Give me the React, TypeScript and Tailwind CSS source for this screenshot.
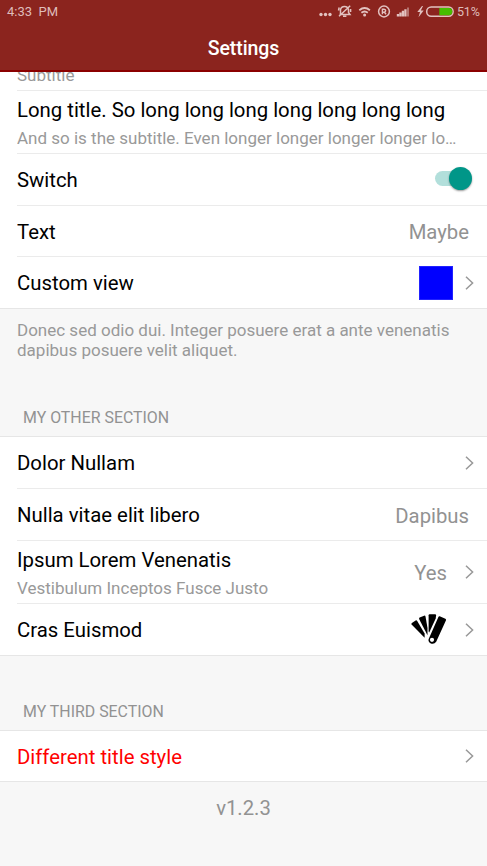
import type { ReactNode } from "react";

function Chevron() {
  return (
    <svg className="ml-[12px] h-[14px] w-[9px] shrink-0" viewBox="0 0 9 14" fill="none" stroke="#989898" strokeWidth="1.5">
      <path d="M1 0.8 7.6 7 1 13.2" />
    </svg>
  );
}

function Swatches() {
  return (
    <svg className="h-[32px] w-[36px]" viewBox="0 0 36 32" fill="#000">
      <path d="M.6 10.4Q0 9.5.9 8.9L4.6 6.5Q5.6 6 6.2 6.9L13.6 19.6V23.8Z" />
      <path d="M8.1 4.9Q7.8 3.9 8.7 3.5L13.1 1.7Q14.2 1.3 14.5 2.4L16.5 14V21.2Z" />
      <path d="M17.6 1.2Q17.6.2 18.6.2H24Q25.2.2 25.1 1.4L24.7 4.5 18.2 18.4 17.6 17.5Z" />
      <path fillRule="evenodd" d="M28.7 2.3 34.4 4.8Q35.4 5.3 35 6.3L25.2 27.7Q22.9 31 19.4 29.2 16.5 27.3 17.9 24.5L27.4 3Q27.8 1.9 28.7 2.3ZM21 23.7a2.1 2.1 0 1 0 0 4.2 2.1 2.1 0 0 0 0-4.2Z" />
    </svg>
  );
}

type RowProps = {
  title: string;
  subtitle?: string;
  value?: ReactNode;
  valueMargin?: string;
  arrow?: boolean;
  height?: string;
  last?: boolean;
  color?: string;
};

function Row({
  title,
  subtitle,
  value,
  valueMargin = "mr-[5px]",
  arrow,
  height = "h-[52px]",
  last,
  color = "text-black",
}: RowProps) {
  return (
    <div className={`bg-white ${last ? "border-b border-[#e6e6e6]" : "pl-[17px]"}`}>
      <div className={`flex items-center pr-[13px] ${height} ${last ? "pl-[17px]" : "border-b border-[#ebebeb]"}`}>
        <div className={`min-w-0 flex-1 ${subtitle ? "pt-[4px]" : "pt-px"}`}>
          <div className={`truncate text-[20.35px] leading-[28px] ${color}`}>{title}</div>
          {subtitle && <div className="truncate pr-[13px] text-[17px] leading-[28px] text-[#999]">{subtitle}</div>}
        </div>
        {typeof value === "string" ? (
          <div className={`pt-[2px] text-[20.3px] leading-[30px] text-[#929292] ${valueMargin}`}>{value}</div>
        ) : (
          value && <div className={valueMargin}>{value}</div>
        )}
        {arrow && <Chevron />}
      </div>
    </div>
  );
}

function Toggle() {
  return (
    <div className="relative -mr-[3px] -mt-[2px] h-[23px] w-[37px] pt-[4px]">
      <div className="h-[15px] w-[34px] rounded-full bg-[#b2dfdb]" />
      <div className="absolute right-0 top-0 size-[23px] rounded-full bg-[#009688] shadow-[0_1px_2px_rgba(0,0,0,0.4)]" />
    </div>
  );
}

function StatusBar() {
  return (
    <div className="flex h-[24px] items-center pl-[7px] pr-[7px] text-[13px] text-[#dfbcba]">
      <span>4:33&nbsp; PM</span>
      <svg className="ml-auto h-[24px] w-[138px]" viewBox="318 0 138 24" fill="none" stroke="#e2c2c0" strokeWidth="1.3">
        <g fill="#e2c2c0" stroke="none">
          <circle cx="321" cy="14.5" r="1.7" />
          <circle cx="325.5" cy="14.5" r="1.7" />
          <circle cx="330" cy="14.5" r="1.7" />
          <path d="M396.8 16.5v-2.5h2.3v2.5ZM399.3 16.5v-4h2.3v4ZM401.8 16.5v-5.8h2.3v5.8ZM404.3 16.5v-7.3h2.3v7.3Z" />
          <path fillOpacity=".5" d="M407 16.5v-9h2v9Z" />
          <path d="m422 6-4.7 6h2.7l-1.5 5.2 5.2-6.6h-2.9l2.2-4.6Z" />
        </g>
        <path strokeWidth="1.5" d="M340.5 14V9.8Q341 6.6 344.5 6.6T348.5 9.8V12.4L350 14.6H339.5M343 16.2h3.4M339 16.3 350.2 5.7M338.5 10.5 339.2 7.5M350.6 12v-3" />
        <path strokeWidth="1.8" d="M359.3 10.2q5.3-4.4 10.6 0M361.4 12.8q3.2-2.6 6.4 0" />
        <circle cx="364.6" cy="15" r="1.5" fill="#e2c2c0" stroke="none" />
        <circle cx="384" cy="11.5" r="5.4" strokeWidth="1.5" />
        <path strokeWidth="1.4" d="M382.4 14.3V9.2h1.6q1.7.2 1.7 1.5t-1.7 1.5h-1.6M384.2 12.1l1.9 2.2" />
        <rect x="426.7" y="6.9" width="26.4" height="9.4" rx="4.5" strokeWidth="1.5" />
        <path fill="#46bd00" stroke="none" d="M439.3 8h10q3 .3 3 3.6t-3 3.6h-10Z" />
      </svg>
      <span className="ml-px w-[23px] text-[12.5px] tracking-[-0.2px]">51%</span>
    </div>
  );
}

export default function App() {
  return (
    <div className="flex h-[866px] w-[487px] flex-col overflow-hidden bg-[#f7f7f7] font-['Roboto',sans-serif]">
      <header className="h-[72px] shrink-0 border-b-2 border-[#8b0000] bg-[#8b241e]">
        <StatusBar />
        <h1 className="mt-[9px] text-center text-[19.5px] font-medium leading-[32px] tracking-[-0.1px] text-white">Settings</h1>
      </header>

      <div className="h-[18px] shrink-0 overflow-hidden bg-white pl-[17px]">
        <div className="-mt-[11px] text-[17px] leading-[28px] text-[#999]">Subtitle</div>
      </div>
      <div className="h-px shrink-0 bg-white pl-[17px]">
        <div className="h-px bg-[#ebebeb]" />
      </div>
      <Row
        title="Long title. So long long long long long long long"
        subtitle="And so is the subtitle. Even longer longer longer longer longer longer"
        height="h-[63px]"
      />
      <Row title="Switch" value={<Toggle />} />
      <Row title="Text" value="Maybe" height="h-[51px]" />
      <Row
        title="Custom view"
        value={<div className="size-[34px] border border-[#2222ff] bg-[#0000ff]" />}
        valueMargin="mr-0"
        arrow
        height="h-[51px]"
        last
      />

      <p className="h-[88px] shrink-0 px-[17px] pt-[11px] text-[17px] leading-[20px] text-[#999]">
        Donec sed odio dui. Integer posuere erat a ante venenatis dapibus posuere velit aliquet.
      </p>
      <h2 className="h-[40px] shrink-0 border-b border-[#e6e6e6] pl-[23px] text-[15.9px] leading-[42px] text-[#929292]">MY OTHER SECTION</h2>
      <Row title="Dolor Nullam" arrow />
      <Row title="Nulla vitae elit libero" value="Dapibus" />
      <Row title="Ipsum Lorem Venenatis" subtitle="Vestibulum Inceptos Fusce Justo" value="Yes" valueMargin="mr-[6px]" arrow height="h-[63px]" />
      <Row title="Cras Euismod" value={<Swatches />} valueMargin="mr-[6px]" arrow height="h-[51px]" last />

      <h2 className="mt-[35px] h-[40px] shrink-0 border-b border-[#e6e6e6] pl-[23px] text-[15.9px] leading-[42px] text-[#929292]">MY THIRD SECTION</h2>
      <Row title="Different title style" arrow height="h-[50px]" last color="text-[#ff0000]" />
      <footer className="pt-[12px] text-center text-[20.3px] leading-[28px] text-[#929292]">v1.2.3</footer>
    </div>
  );
}
